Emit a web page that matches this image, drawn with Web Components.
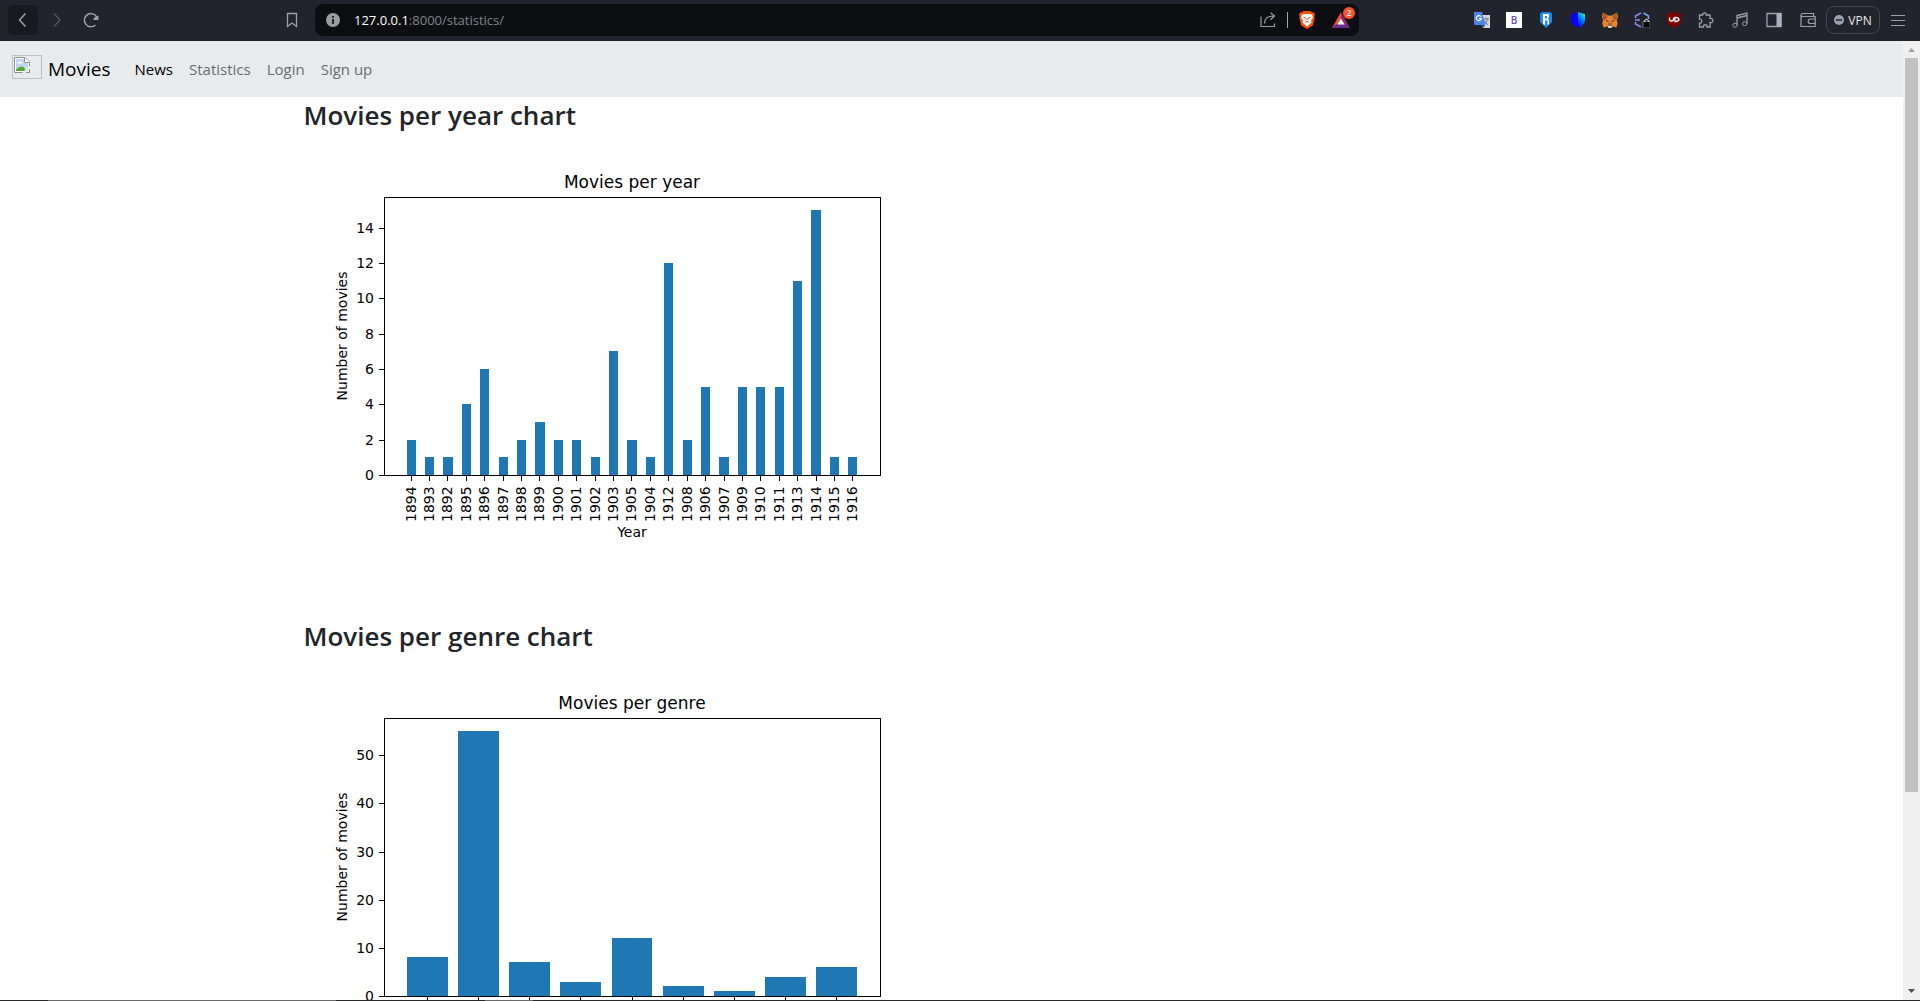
<!DOCTYPE html>
<html lang="en">
<head>
<meta charset="utf-8">
<title>Movies – Statistics</title>
<style>
html, body { margin: 0; height: 100%; }
body { display: flex; flex-direction: column; overflow: hidden; background: #fff; color: #212529; font-family: "Open Sans", "Noto Sans", sans-serif; }
browser-bar, task-strip { flex: none; }
page-view { flex: 1; min-height: 0; }
</style>
</head>
<body>
<browser-bar></browser-bar>
<page-view>
  <site-nav>
    <nav-link href="/" active>News</nav-link>
    <nav-link href="/statistics/">Statistics</nav-link>
    <nav-link href="/login/">Login</nav-link>
    <nav-link href="/signup/">Sign up</nav-link>
  </site-nav>
  <page-container>
    <chart-section>
      <span slot="heading">Movies per year chart</span>
      <bar-chart caption="Movies per year" y-label="Number of movies" x-label="Year" step="2" bar-width="0.5"
        labels="1894,1893,1892,1895,1896,1897,1898,1899,1900,1901,1902,1903,1905,1904,1912,1908,1906,1907,1909,1910,1911,1913,1914,1915,1916"
        values="2,1,1,4,6,1,2,3,2,2,1,7,2,1,12,2,5,1,5,5,5,11,15,1,1"></bar-chart>
    </chart-section>
    <chart-section>
      <span slot="heading">Movies per genre chart</span>
      <bar-chart caption="Movies per genre" y-label="Number of movies" step="10" bar-width="0.8"
        values="8,55,7,3,12,2,1,4,6"></bar-chart>
    </chart-section>
  </page-container>
</page-view>
<task-strip></task-strip>

<script>
function define(name, html, setup) {
  const tpl = document.createElement('template');
  tpl.innerHTML = html;
  customElements.define(name, class extends HTMLElement {
    connectedCallback() {
      if (this.shadowRoot) return;
      this.attachShadow({ mode: 'open' }).appendChild(tpl.content.cloneNode(true));
      if (setup) setup(this, this.shadowRoot);
    }
  });
}

define('browser-bar', `
<style>
:host { display: flex; align-items: center; box-sizing: border-box; height: 41px; padding: 0 15px 1px 8px; background: #21242c; color: #9ba0ae; font-family: "Open Sans", sans-serif; }
button { display: grid; place-items: center; border: 0; padding: 0; margin: 0; background: none; color: inherit; font: inherit; }
svg { display: block; fill: none; stroke: currentColor; }
.nav { display: flex; gap: 4px; width: 269px; }
.nav button { width: 30px; height: 30px; border-radius: 6px; }
.nav .back { background: #16191d; }
.nav .fwd { color: #51555f; }
.save { width: 30px; height: 30px; margin-right: 8px; }
.address { flex: 1; display: flex; align-items: center; box-sizing: border-box; height: 32px; padding: 0 9px 0 11px; border-radius: 8px; background: #0d0e12; font-size: 13px; color: #80838a; }
.address .url { flex: 1; margin-left: 14px; outline: 0; }
.address b { font-weight: 400; color: #fff; }
.tools { display: flex; align-items: center; gap: 11px; }
.rule { width: 1px; height: 16px; background: #a5a7ab; }
.rewards { position: relative; margin-left: 6px; }
.badge { position: absolute; left: 11px; top: -5px; width: 12px; height: 12px; border-radius: 6px; background: #fb542b; color: #fff; font-size: 8px; line-height: 12px; font-weight: 600; text-align: center; }
.ext { display: flex; gap: 16px; margin-left: 115px; }
.ext svg { stroke: none; }
.own { display: flex; gap: 18px; margin-left: 16px; }
.vpn { display: flex; align-items: center; justify-content: center; gap: 4px; box-sizing: border-box; width: 54px; height: 28px; margin: 0 11px 0 10px; border: 1px solid #43464f; border-radius: 8px; color: #e8e9ed; font-size: 12px; }
</style>
<div class="nav">
  <button class="back" aria-label="Back"><svg width="16" height="16"><path d="M10.500 1.500L4.500 8l6 6.500" stroke-width="1.500"/></svg></button>
  <button class="fwd" aria-label="Forward"><svg width="16" height="16"><path d="M5 1.500L11 8l-6 6.500" stroke-width="1.500"/></svg></button>
  <button aria-label="Reload"><svg width="16" height="16"><path d="M12.500 13A6.600 6.600 0 1 1 14 5.500" stroke-width="1.500"/><path d="M15.500 3.500v4.500H10.500a2.500 2.500 0 0 1 2.500-3z" fill="currentColor" stroke="none"/></svg></button>
</div>
<button class="save" aria-label="Bookmark"><svg width="12" height="16"><path d="M1.500 1.500h9v13L6 11l-4.500 3.500z" stroke-width="1.300"/></svg></button>
<div class="address">
  <svg width="14" height="14" viewBox="0 0 14 14"><circle cx="7" cy="7" r="7" fill="#999ca1" stroke="none"/><path d="M7 6v5M7 3v1.700" stroke="#0d0e12" stroke-width="1.700"/></svg>
  <div class="url" role="textbox" aria-label="Address" tabindex="0"><b>127.0.0.1</b>:8000/statistics/</div>
  <div class="tools">
    <button aria-label="Share"><svg width="16" height="16"><path d="M1 4.500v10h13.500v-3M4.500 11.500c0-5 3-7.500 9-7.500M10.500.800L14.500 4l-4 3.700" stroke="#999ca1" stroke-width="1.200"/></svg></button>
    <span class="rule"></span>
    <button aria-label="Shields"><svg width="16" height="18"><path d="M4.500 0h7l1.500 1.500 1.500-.2L16 3.500l-.7 2 .4 1.500-2 7.500L8 18l-5.700-3.500L.300 7l.4-1.500-.7-2 1.500-2.200 1.500.2z" fill="#f95213" stroke="none"/><path d="M3 3.500l3-.5h4l3 .5 1 3-2 3 .5 2L8 15.500 3.500 11.500l.5-2-2-3z" fill="#fff" stroke="none"/><path d="M4.500 6.300l2.200.7.5 2M11.500 6.300L9.300 7l-.5 2M6 11.500l2-1.200 2 1.200" stroke="#f95213"/></svg></button>
    <button class="rewards" aria-label="Rewards"><svg width="18" height="16"><path d="M9 0L0 16h4.500L9 8z" fill="#f04d2b" stroke="none"/><path d="M9 0l9 16-5-3L9 7z" fill="#98226d" stroke="none"/><path d="M0 16l4.500-4h9L18 16z" fill="#662d91" stroke="none"/><path d="M9 6.500l3.700 6H5.300z" fill="#fff" stroke="none"/></svg><span class="badge">2</span></button>
  </div>
</div>
<div class="ext">
  <button aria-label="Translate"><svg width="16" height="16"><path d="M6 3h10v13H9z" fill="#d6d8dc"/><path d="M9.500 7h5.500M12 5.500V7m-2 1.500l4 4.500m0-6l-3.500 5.500" stroke="#687681"/><path d="M0 0h8l3.500 13H1.200L0 12z" fill="#4a85ec"/><path d="M8 13h3.500L9 16z" fill="#2a56c6"/><path d="M7 4.800A2.500 2.500 0 1 0 7.300 6.700H5" stroke="#fff" stroke-width="1.200"/></svg></button>
  <button aria-label="B"><svg width="16" height="16"><path d="M0 0h16v16H0z" fill="#fff"/><text x="8" y="12" text-anchor="middle" font-family="Open Sans" font-size="10" font-weight="600" fill="#5a50b8">B</text></svg></button>
  <button aria-label="Ronin"><svg width="16" height="16"><path d="M4 0h8l2 1.500V10l-6 6-6-6V1.500z" fill="#1a8cf0"/><path d="M5 2h6v3.500L10 7l1 1.500V12L9.500 13V8.500H7V13L5 12zm2 2v2.500h2V4z" fill="#fff" fill-rule="evenodd"/></svg></button>
  <button aria-label="Trust"><svg width="16" height="16"><defs><linearGradient id="t" x1=".8" y1="0" x2=".3" y2="1"><stop stop-color="#48ff91"/><stop offset=".4" stop-color="#0094ff"/><stop offset="1" stop-color="#0500ff"/></linearGradient></defs><path d="M1 2.300L8 0v16C3 13.500 1 11 1 7z" fill="#0500ff"/><path d="M15 2.300L8 0v16c5-2.500 7-5 7-9z" fill="url(#t)"/></svg></button>
  <button aria-label="MetaMask"><svg width="16" height="16"><path d="M1 .5L6 3.500h4L15 .5l1 4-1 4 .7 3-1.400 4-4-1-1 1.200H6.700l-1-1.200-4 1-1.400-4L1 8.500l-1-4z" fill="#e8822e"/><path d="M1 .5l4.500 4L4 7.500 1 8.300zM15 .5l-4.500 4L12 7.500l3 .8z" fill="#a55a2c"/><path d="M6 11l.5 3h3l.5-3z" fill="#8d6747"/><path d="M6 14h4l-.5 2h-3z" fill="#ddd"/><path d="M4 8.500l2.500 1M12 8.500l-2.500 1" stroke="#3b3036"/></svg></button>
  <button aria-label="Wallet guard"><svg width="16" height="16"><path d="M7 1L1.500 4v2M1 8h5M1.500 10v2L7 15" stroke="#9282f0" stroke-width="1.600"/><path d="M9.500 1l5 3v3" stroke="#78a9ef" stroke-width="1.600"/><path d="M9 9.500h7V16H9z" fill="#000" stroke="#ddd" stroke-width=".5"/><path d="M10.500 9.500V8.500q2-2.500 4 0v1" stroke="#fff"/></svg></button>
  <button aria-label="uBlock"><svg width="16" height="16"><path d="M8 0l7 2v6.500c0 3-3 5.500-7 7.500-4-2-7-4.500-7-7.500V2z" fill="#800000"/><path d="M3.500 5.500v2.500q2 2 4 0v-2.500M9 5.500v4h1q3-.5 3-2t-3-2z" stroke="#fff" stroke-width="1.300"/></svg></button>
</div>
<div class="own">
  <button aria-label="Extensions"><svg width="16" height="16"><path d="M1.500 3h3.200C4 .2 9 .2 8.300 3h3.700v3.500c3.800-1 3.800 5 0 4V15H9c.7-3-4.200-3-3.500 0h-4v-3.700c3 .6 3-4.900 0-4.100z" stroke-width="1.300"/></svg></button>
  <button aria-label="Playlist"><svg width="16" height="16"><path d="M5 13V3.500L15 1v10.500M5 6l10-2.500" stroke-width="1.300"/><ellipse cx="3" cy="13.200" rx="2.200" ry="2"/><ellipse cx="12.700" cy="11.700" rx="2.200" ry="2"/></svg></button>
  <button aria-label="Sidebar"><svg width="16" height="16"><path d="M1 1.500h14v13H1z" stroke-width="1.300"/><path d="M10.500 1h5v14h-5z" fill="#aab0c0" stroke="none"/></svg></button>
  <button aria-label="Wallet"><svg width="16" height="16"><path d="M13.500 4.500V1.500H2.500C.5 2 .5 4.500 2.500 4.500h12.700v10H1V3M15 7h-4.500c-3 0-3 4.500 0 4.500H15" stroke-width="1.200"/></svg></button>
</div>
<button class="vpn"><svg width="10" height="10"><circle cx="5" cy="5" r="5" fill="#9ba0ae" stroke="none"/><path d="M2 5h6" stroke="#21242c" stroke-width="1.500"/></svg>VPN</button>
<button aria-label="Menu"><svg width="14" height="12"><path d="M0 1.500h14M0 6.500h14M0 11.500h14" stroke-width="1"/></svg></button>
`);

define('page-view', `
<style>
:host { display: flex; overflow: hidden; }
main { flex: 1; min-width: 0; overflow: hidden; }
.scroll { flex: none; display: flex; flex-direction: column; align-items: center; justify-content: space-between; width: 17px; background: #f0f0f0; }
.track { flex: 1; width: 13px; }
.thumb { height: 79.4%; background: #c1c1c1; }
svg { display: block; }
</style>
<main><slot></slot></main>
<div class="scroll" aria-hidden="true">
  <svg width="17" height="17"><path d="M5 11h7L8.500 7z" fill="#a3a3a3"/></svg>
  <div class="track"><div class="thumb"></div></div>
  <svg width="17" height="17"><path d="M5 6h7l-3.500 4z" fill="#505050"/></svg>
</div>
`);

define('site-nav', `
<style>
:host { display: block; background: #e8ebee; }
nav { display: flex; align-items: center; height: 56px; padding: 0 12px; }
.brand { display: flex; align-items: center; gap: 6px; margin-right: 24px; color: #000; font-size: 19px; line-height: 30px; text-decoration: none; }
.logo { box-sizing: border-box; width: 30px; height: 24px; padding: 1px; margin-bottom: 4px; border: 1px solid #c0c0c0; }
svg { display: block; }
.links { display: flex; gap: 16px; }
</style>
<nav>
  <a class="brand" href="/"><span class="logo"><svg width="16" height="16"><path d="M.5.500h10.500l4.500 4.500v10.500H.5z" fill="#fff" stroke="#909090"/><path d="M2 2h8v4h4v8H2z" fill="#c2d5f7"/><path d="M3 6.500q0-1.500 1.500-1.500 1-2 2.500 0 1.500 0 1.500 1.500z" fill="#fff"/><path d="M2 14v-1.500Q6 8 9.500 10l2.500 4z" fill="#56a835"/><path d="M10.500.500v5h5" fill="#fff" stroke="#909090"/><path d="M8 16l8-7.500v3L11.500 16z" fill="#e8ebee"/></svg></span>Movies</a>
  <div class="links"><slot></slot></div>
</nav>
`);

define('nav-link', `
<style>
:host { display: block; }
a { color: #696b6d; font-size: 15px; line-height: 24px; text-decoration: none; }
:host([active]) a { color: #000; }
</style>
<a><slot></slot></a>
`, (el, root) => { root.querySelector('a').href = el.getAttribute('href'); });

define('page-container', `
<style>
:host { display: block; box-sizing: border-box; max-width: 1320px; margin: 0 auto; padding: 0 12px; }
</style>
<slot></slot>
`);

define('chart-section', `
<style>
:host { display: block; }
h2 { margin: 0; padding: 1px 0 7px; font-size: 26px; line-height: 34px; font-weight: 600; }
</style>
<h2><slot name="heading"></slot></h2>
<slot></slot>
`);

define('bar-chart', `
<style>
:host { display: block; }
svg { display: block; font-family: "DejaVu Sans", sans-serif; font-size: 14px; fill: #000; }
.title { font-size: 17px; }
.bar { fill: #1f77b4; shape-rendering: crispEdges; }
.line { fill: none; stroke: #000; stroke-width: 1; shape-rendering: crispEdges; }
</style>
<svg width="640" height="479" role="img"></svg>
`, (el, root) => {
  const L = 80, R = 576, T = 58, B = 336;
  const list = n => (el.getAttribute(n) || '').split(',').filter(Boolean);
  const values = list('values').map(Number), labels = list('labels');
  const w = +el.getAttribute('bar-width'), step = +el.getAttribute('step');
  const span = (values.length - 1 + w) * 1.1;
  const unit = (R - L) / span;
  const x0 = L + (span / 22 + w / 2) * unit;
  const max = Math.max(...values) * 1.05;
  const y = v => B - v / max * (B - T);
  const up = (cx, cy, anchor, s) => `<text transform="translate(${cx} ${cy}) rotate(-90)" text-anchor="${anchor}">${s}</text>`;
  let out = '', line = `M${L + .5} ${T + .5}H${R + .5}V${B + .5}H${L + .5}Z`;
  values.forEach((v, i) => {
    const c = x0 + i * unit, l = Math.round(c - w / 2 * unit), r = Math.round(c + w / 2 * unit);
    out += `<rect class="bar" x="${l}" y="${Math.round(y(v))}" width="${r - l}" height="${B - Math.round(y(v))}"/>`;
    line += `M${Math.floor(c) + .5} ${B}v6`;
    if (labels[i]) out += up(Math.floor(c) + 5, B + 47, 'start', labels[i]);
  });
  for (let t = 0; t <= max; t += step) {
    const p = Math.round(y(t));
    line += `M${L} ${p + .5}h-5`;
    out += `<text x="${L - 10}" y="${p + 5}" text-anchor="end">${t}</text>`;
  }
  const mid = (L + R) / 2;
  out += `<path class="line" d="${line}"/>`;
  out += `<text class="title" x="${mid}" y="${T - 9}" text-anchor="middle">${el.getAttribute('caption')}</text>`;
  out += up(43, (T + B) / 2, 'middle', el.getAttribute('y-label'));
  if (el.hasAttribute('x-label')) out += `<text x="${mid}" y="${B + 62}" text-anchor="middle">${el.getAttribute('x-label')}</text>`;
  root.querySelector('svg').innerHTML = out;
});

define('task-strip', `
<style>
:host { display: flex; height: 1px; background: #26282c; }
i { background: #66686a; }
.a { width: 288px; margin-left: 48px; }
.b { width: 48px; margin-left: 149px; }
</style>
<i class="a"></i><i class="b"></i>
`);
</script>
</body>
</html>
